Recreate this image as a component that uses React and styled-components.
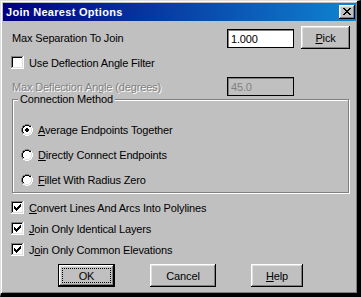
import React from "react";
import styled, { createGlobalStyle, css } from "styled-components";

const GlobalStyle = createGlobalStyle`
  html, body {
    margin: 0;
    padding: 0;
    background: #c0c0c0;
  }
  body {
    font-family: "Liberation Sans", Arial, sans-serif;
    font-size: 11px;
    color: #000;
  }
`;

// pixel palette for the little bitmaps (radio, check, close glyph)
const PAL = { g: "#808080", k: "#000000", w: "#ffffff", l: "#dfdfdf" };

const Pixels = ({ rows }) => {
  const rects = [];
  rows.forEach((row, y) =>
    [...row].forEach((c, x) => {
      if (PAL[c]) rects.push(<rect key={x + "-" + y} x={x} y={y} width="1" height="1" fill={PAL[c]} />);
    })
  );
  const w = rows[0].length;
  const h = rows.length;
  return (
    <svg width={w} height={h} viewBox={`0 0 ${w} ${h}`} shapeRendering="crispEdges" style={{ display: "block" }}>
      {rects}
    </svg>
  );
};

const CLOSE_X = ["kk....kk", ".kk..kk.", "..kkkk..", "...kk...", "..kkkk..", ".kk..kk.", "kk....kk"];

const CHECK = ["......k", ".....kk", "k...kkk", "kk.kkk.", "kkkkk..", ".kkk...", "..k...."];

const radioRows = (on) => {
  const d = on ? "k" : "w";
  return [
    "....gggg....",
    "..ggkkkkgg..",
    ".gkkwwwwkkw.",
    ".gkwwwwwwlw.",
    `gkww${"w" + d + d + "w"}wwlw`,
    `gkww${d + d + d + d}wwlw`,
    `gkww${d + d + d + d}wwlw`,
    `gkww${"w" + d + d + "w"}wwlw`,
    ".gkwwwwwwlw.",
    ".gllwwwwllw.",
    "..wwllllww..",
    "....wwww....",
  ];
};

const Window = styled.div`
  box-sizing: border-box;
  width: 361px;
  height: 297px;
  background: #c0c0c0;
  border-style: solid;
  border-width: 1px 4px 4px 1px;
  border-color: #dfdfdf #000 #000 #dfdfdf;
  box-shadow: inset 1px 1px 0 #fff, inset -1px -1px 0 #808080;
  padding: 2px 1px 1px 2px;
  display: flex;
  flex-direction: column;
`;

const TitleBar = styled.div`
  height: 18px;
  flex: none;
  display: flex;
  align-items: center;
  padding: 0 1px 0 3px;
  background: linear-gradient(to right, #000080, #1084d0);
  color: #fff;
  font-weight: bold;
  font-size: 11px;
  letter-spacing: 0.3px;
`;

const TitleText = styled.span`
  flex: 1;
  white-space: nowrap;
`;

const bevel = css`
  box-shadow: inset -1px -1px 0 #000, inset 1px 1px 0 #fff, inset -2px -2px 0 #808080, inset 2px 2px 0 #dfdfdf;
`;

const CloseButton = styled.div`
  width: 16px;
  height: 14px;
  box-sizing: border-box;
  background: #c0c0c0;
  ${bevel};
  display: flex;
  align-items: center;
  justify-content: center;
  padding: 0 0 1px 0;
`;

const Body = styled.div`
  flex: 1;
  display: flex;
  flex-direction: column;
  padding: 5px 6px 0 9px;
  letter-spacing: -0.15px;
`;

const Row = styled.div`
  display: flex;
  align-items: center;
  height: ${(p) => p.$h}px;
  margin-top: ${(p) => p.$mt || 0}px;
`;

const Label = styled.span`
  flex: 1;
  white-space: nowrap;
  color: ${(p) => (p.$disabled ? "#808080" : "#000")};
  text-shadow: ${(p) => (p.$disabled ? "1px 1px 0 #fff" : "none")};
`;

const Field = styled.div`
  box-sizing: border-box;
  width: 67px;
  height: 19px;
  align-self: flex-start;
  margin-top: ${(p) => p.$mt || 0}px;
  margin-right: ${(p) => p.$mr || 0}px;
  border: 1px solid #000;
  box-shadow: inset 1px 1px 0 #808080;
  background: ${(p) => (p.$disabled ? "#c0c0c0" : "#fff")};
  color: ${(p) => (p.$disabled ? "#808080" : "#000")};
  display: flex;
  align-items: center;
  padding: 0 2px 0 3px;
`;

const Button = styled.button`
  box-sizing: border-box;
  width: ${(p) => p.$w}px;
  height: 23px;
  padding: 0;
  margin: 0;
  flex: none;
  background: #c0c0c0;
  border: none;
  font-family: "Liberation Sans", Arial, sans-serif;
  font-size: 11px;
  letter-spacing: -0.15px;
  color: #000;
  ${bevel};
  ${(p) =>
    p.$default &&
    css`
      border: 1px solid #000;
      outline: 1px dotted #000;
      outline-offset: -5px;
    `}
`;

const Key = styled.span`
  text-decoration: underline;
  text-underline-offset: 1px;
`;

const CheckRow = styled.div`
  display: flex;
  align-items: center;
  gap: 5px;
  height: ${(p) => p.$h || 21}px;
  margin-top: ${(p) => p.$mt || 0}px;
  margin-left: -1px;
  white-space: nowrap;
`;

const CheckBox = styled.span`
  box-sizing: border-box;
  width: 13px;
  height: 13px;
  flex: none;
  background: #fff;
  box-shadow: inset -1px -1px 0 #fff, inset 1px 1px 0 #808080, inset -2px -2px 0 #dfdfdf, inset 2px 2px 0 #000;
  padding: 3px;
`;

const Group = styled.fieldset`
  margin: -3px 1px 0 0;
  padding: 11px 0 0 8px;
  min-width: 0;
  border: 1px solid #808080;
  box-shadow: inset 1px 1px 0 #fff, 1px 1px 0 #fff;
`;

const Legend = styled.legend`
  margin-left: -3px;
  padding: 0 2px;
  line-height: 13px;
  background: #c0c0c0;
`;

const RadioRow = styled.div`
  display: flex;
  align-items: center;
  gap: 5px;
  height: 25px;
  white-space: nowrap;
`;

const ButtonRow = styled.div`
  display: flex;
  gap: 35px;
  padding-left: 46px;
  margin-top: 4px;
`;

const Check = ({ checked, children, mt, h }) => (
  <CheckRow $mt={mt} $h={h}>
    <CheckBox>{checked && <Pixels rows={CHECK} />}</CheckBox>
    <span>{children}</span>
  </CheckRow>
);

const Radio = ({ checked, children }) => (
  <RadioRow>
    <Pixels rows={radioRows(checked)} />
    <span>{children}</span>
  </RadioRow>
);

export default function App() {
  return (
    <>
      <GlobalStyle />
      <Window>
        <TitleBar>
          <TitleText>Join Nearest Options</TitleText>
          <CloseButton>
            <Pixels rows={CLOSE_X} />
          </CloseButton>
        </TitleBar>
        <Body>
          <Row $h={23}>
            <Label>Max Separation To Join</Label>
            <Field $mt={3} $mr={7}>1.000</Field>
            <Button $w={49}>
              <Key>P</Key>ick
            </Button>
          </Row>
          <Check mt={7} h={13}>Use Deflection Angle Filter</Check>
          <Row $h={19} $mt={8}>
            <Label $disabled>Max Deflection Angle (degrees)</Label>
            <Field $disabled $mr={56}>45.0</Field>
          </Row>
          <Group>
            <Legend>Connection Method</Legend>
            <Radio checked>
              <Key>A</Key>verage Endpoints Together
            </Radio>
            <Radio>
              <Key>D</Key>irectly Connect Endpoints
            </Radio>
            <Radio>
              <Key>F</Key>illet With Radius Zero
            </Radio>
          </Group>
          <Check checked mt={4}>
            <Key>C</Key>onvert Lines And Arcs Into Polylines
          </Check>
          <Check checked>
            <Key>J</Key>oin Only Identical Layers
          </Check>
          <Check checked>
            J<Key>o</Key>in Only Common Elevations
          </Check>
          <ButtonRow>
            <Button $w={57} $default>OK</Button>
            <Button $w={66}>Cancel</Button>
            <Button $w={52}>
              <Key>H</Key>elp
            </Button>
          </ButtonRow>
        </Body>
      </Window>
    </>
  );
}
